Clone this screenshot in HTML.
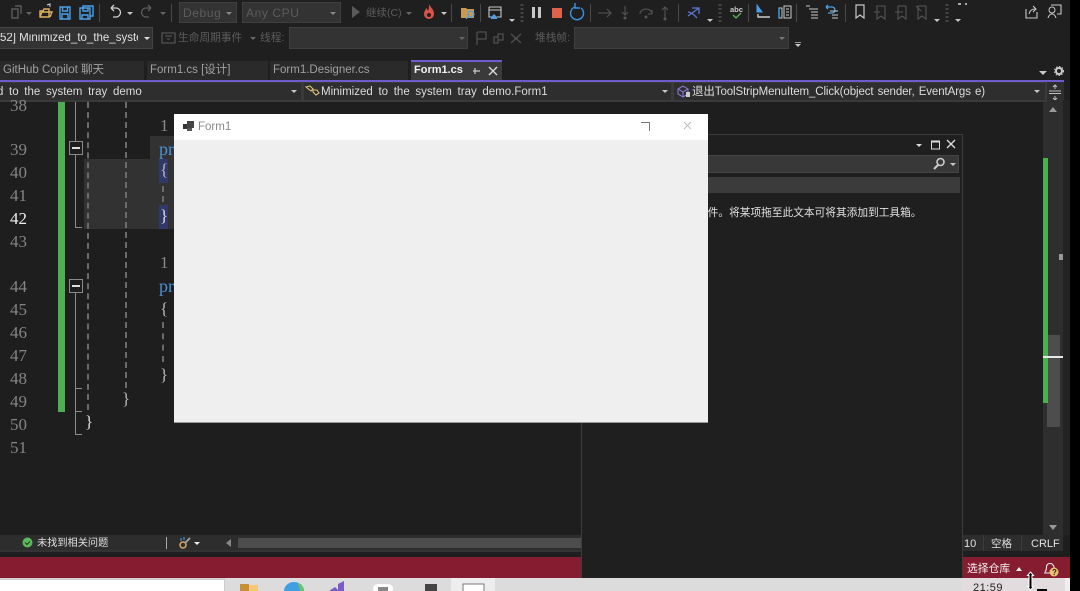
<!DOCTYPE html>
<html><head><meta charset="utf-8"><style>
html,body{margin:0;padding:0;width:1080px;height:591px;overflow:hidden;background:#000}
#r{position:relative;width:1080px;height:591px;overflow:hidden;background:#000;font-family:"Liberation Sans","Noto Sans CJK SC",sans-serif}
#r div,#r svg,#r span.t{position:absolute}
.t{white-space:nowrap;line-height:1}
.n{font-family:"Liberation Serif",serif;font-size:17px;color:#858585;left:10px}
.c{font-family:"Liberation Serif",serif;font-size:17px;color:#b8b8b8}
.b{font-family:"Liberation Serif",serif;font-size:18px;color:#4a8fd8;left:159px}
.sep{width:1px;background:#4a4a4a;top:4px;height:18px}
.car{width:0;height:0;border-left:3px solid transparent;border-right:3px solid transparent;border-top:3px solid #c8c8c8}
.dis{border-top-color:#666}
.dd{background:#333;border:1px solid #3f3f3f;box-sizing:border-box}
.g{color:#5c5c5c;font-size:11.5px}
.tab{top:61px;height:19px;background:#2a2a2a;font-size:11.5px;color:#a0a0a0;line-height:18px;box-sizing:border-box;padding-left:3px;white-space:nowrap}
.nav{font-size:11.5px;color:#dcdcdc;word-spacing:2.5px;top:87px}
.dash{width:0;border-left:2px dashed #6a6a6a}
.box{left:69px;width:12px;height:12px;border:1px solid #8a8a8a;background:#1e1e1e}
.box:after{content:"";position:absolute;left:2px;right:2px;top:5px;height:2px;background:#ddd}
.tk{background:#8c8c8c;height:1px;left:75px;width:7px}
</style></head><body><div id="r">

<!-- chrome background -->
<div style="left:0;top:0;width:1070px;height:100px;background:#1f1f1f"></div>

<!-- toolbar row 1 -->
<svg style="left:0;top:0" width="1070" height="26" viewBox="0 0 1070 26" fill="none">
<path d="M12 9h6v9h-6zM15 6h6v8" stroke="#5a5a5a" stroke-width="1.400"/>
<path d="M40 11h3l1-2h5v8H40zM40 17l2-5h10l-2 5" stroke="#e0b060" stroke-width="1.400"/><path d="M47 5l3-1v3" stroke="#ddd"/>
<path d="M60 7h10v12H60zM62.500 7v4h5V7M62 19v-5h6v5" stroke="#4aa0e8" stroke-width="1.400"/>
<path d="M80 8h10v11H80zM83 8V6h10v10h-3M83 8v3h5V8M82 19v-4h6v4" stroke="#4aa0e8" stroke-width="1.400"/>
<path d="M111 8h5a4 4 0 0 1 0 9h-3M111 8l3-3M111 8l3 3" stroke="#d0d0d0" stroke-width="1.300"/>
<path d="M151 8h-5a4 4 0 0 0 0 9h3M151 8l-3-3M151 8l-3 3" stroke="#5c5c5c" stroke-width="1.300"/>
<path d="M352 6l8 6-8 6z" fill="#5a5a5a"/>
<path d="M429 4c1 3 5 5 5 10a5 5 0 0 1-10 0c0-3 2-4 2-6 1 1 2 2 2 3 1-2 1-5 1-7z" fill="#d9534a"/><circle cx="429" cy="15" r="2" fill="#2a1a1a"/>
<path d="M461 8h5l1 1h7v9h-13z" fill="#c99a54"/><circle cx="471" cy="14" r="3" stroke="#4aa0e8" stroke-width="1.200"/><path d="M469 16l-3 3" stroke="#4aa0e8" stroke-width="1.200"/>
<path d="M489 7h12v10h-4M489 7v10h3M489 10h12" stroke="#c8c8c8" stroke-width="1.100"/><path d="M491 17l3-3 3 3v2h-6z" fill="#4aa0e8"/>
<rect x="532" y="7" width="3" height="11" fill="#c8c8c8"/><rect x="538" y="7" width="3" height="11" fill="#c8c8c8"/>
<rect x="552" y="8" width="10" height="10" fill="#e0624a"/>
<path d="M581 8a6.500 6.500 0 1 1-6-1M575 3v5h5" stroke="#3c94e4" stroke-width="1.400"/>
<path d="M598 13h13M607 9l4 4-4 4" stroke="#555" stroke-width="1.100"/>
<path d="M625 6v9M622 12l3 3 3-3" stroke="#555" stroke-width="1.100"/><circle cx="625" cy="18" r="1.500" fill="#555"/>
<path d="M640 14a6 5 0 0 1 12 0M652 10v4h-4" stroke="#555" stroke-width="1.100"/><circle cx="646" cy="17" r="1.500" fill="#555"/>
<path d="M665 18V8M662 10l3-3 3 3" stroke="#555" stroke-width="1.100"/><circle cx="665" cy="19" r="1.500" fill="#555"/>
<path d="M688 16l11-8M692 8h7v6M688 12c4 0 7 4 9 6" stroke="#5a78d8" stroke-width="1.300"/>
<text x="730" y="12" font-size="7.500" font-weight="bold" fill="#ccc" font-family="Liberation Sans">abc</text><path d="M733 15l3 3 5-5" stroke="#5bb85b" stroke-width="1.300"/>
<path d="M757 5l5 7h-5z" fill="#4aa0e8" stroke="#4aa0e8"/><path d="M758 14v3h12" stroke="#ccc" stroke-width="1.400"/>
<path d="M779 8h3v10h-3zM784 6h7v12h-7zM786 9h3M786 12h3M786 15h3" stroke="#c8c8c8" stroke-width="1"/><path d="M779 8v10" stroke="#4aa0e8" stroke-width="1.400"/>
<path d="M806 6h4M809 9h9M811 12h7M811 15h7M811 18h7" stroke="#c8c8c8" stroke-width="1"/>
<path d="M826 7h6a3 3 0 0 1 0 6h-4M826 7l2-2M826 7l2 2" stroke="#4aa0e8" stroke-width="1.300"/><path d="M830 11h8M832 15h6M832 18h6" stroke="#c8c8c8"/>
<path d="M856 5h8v13l-4-3-4 3z" stroke="#c8c8c8" stroke-width="1.200"/>
<path d="M877 6h8v13l-4-3-4 3zM874 12h6" stroke="#555" stroke-width="1.100"/>
<path d="M898 6h8v13l-4-3-4 3zM895 12h8" stroke="#555" stroke-width="1.100"/>
<path d="M918 6h8v13l-4-3-4 3zM916 6l5 5" stroke="#555" stroke-width="1.100"/>
<path d="M1026 9v9h11v-6M1029 14c1-4 3-5 6-5M1033 6l3 3-3 3" stroke="#c8c8c8" stroke-width="1.100"/>
<path d="M1051 5h10v9h-4M1048 18c1-3 2-4 4-4s3 1 4 4" stroke="#c8c8c8" stroke-width="1.100"/><circle cx="1052" cy="10" r="3" stroke="#c8c8c8"/>
<path d="M522 4v18M720 4v18M947 4v18" stroke="#444" stroke-width="3" stroke-dasharray="2 2"/>
<path d="M958 4h3M965 4h2" stroke="#aaa" stroke-width="2"/>
</svg>
<div class="sep" style="left:99px"></div><div class="sep" style="left:171px"></div><div class="sep" style="left:451px"></div><div class="sep" style="left:480px"></div><div class="sep" style="left:590px"></div><div class="sep" style="left:678px"></div><div class="sep" style="left:748px"></div><div class="sep" style="left:796px"></div><div class="sep" style="left:845px"></div>
<div class="car dis" style="left:26px;top:12px"></div><div class="car" style="left:127px;top:12px"></div><div class="car dis" style="left:160px;top:12px"></div>
<div class="dd" style="left:179px;top:2px;width:58px;height:21px"></div><span class="t g" style="left:183px;top:7px;font-size:12px;letter-spacing:.6px">Debug</span><div class="car dis" style="left:226px;top:12px;border-top-color:#888"></div>
<div class="dd" style="left:242px;top:2px;width:99px;height:21px"></div><span class="t g" style="left:246px;top:7px;font-size:12px;letter-spacing:.6px">Any CPU</span><div class="car dis" style="left:330px;top:12px;border-top-color:#888"></div>
<span class="t g" style="left:366px;top:8px;font-size:10.500px">继续(C)</span><div class="car dis" style="left:406px;top:12px"></div><div class="car" style="left:441px;top:12px"></div>
<div class="car" style="left:509px;top:19px"></div><div class="car" style="left:707px;top:19px"></div><div class="car" style="left:934px;top:19px"></div><div class="car" style="left:955px;top:19px"></div>

<!-- toolbar row 2 -->
<div class="dd" style="left:-2px;top:27px;width:155px;height:22px;border-color:#444"></div>
<span class="t" style="left:0;top:33px;width:138px;overflow:hidden;position:absolute;font-size:11.500px;color:#e0e0e0">52] Minimized_to_the_system</span><div class="car" style="left:144px;top:37px;border-top-color:#ddd"></div>
<svg style="left:160px;top:30px" width="18" height="16" fill="none"><path d="M2 3h13v10H2zM5 6h7M7 9h3" stroke="#5c5c5c" stroke-width="1.100"/></svg>
<span class="t g" style="left:178px;top:33px;font-size:10.700px">生命周期事件</span><div class="car dis" style="left:250px;top:37px"></div>
<span class="t g" style="left:260px;top:33px;font-size:10.700px">线程:</span>
<div class="dd" style="left:289px;top:27px;width:179px;height:22px"></div><div class="car dis" style="left:459px;top:37px"></div>
<svg style="left:474px;top:29px" width="60" height="18" fill="none"><path d="M3 3v13M3 3h9v7H3M20 8h4v6h-4zM24 5h5v6h-5zM37 5l10 9M47 5L37 14M40 9h4" stroke="#4f4f4f" stroke-width="1.300"/></svg>
<span class="t g" style="left:535px;top:33px;font-size:10.700px">堆栈帧:</span>
<div class="dd" style="left:574px;top:27px;width:215px;height:22px"></div><div class="car dis" style="left:779px;top:37px;border-top-color:#777"></div>
<div class="car" style="left:795px;top:44px"></div><div style="left:795px;top:42px;width:6px;height:1px;background:#999"></div>

<!-- tabs -->
<div class="tab" style="left:0;width:144px">GitHub Copilot 聊天</div>
<div class="tab" style="left:147px;width:121px">Form1.cs [设计]</div>
<div class="tab" style="left:270px;width:138px">Form1.Designer.cs</div>
<div style="left:411px;top:60px;width:91px;height:20px;background:#3a3a3a;border-top:2px solid #6c5ccc;box-sizing:border-box"></div>
<span class="t" style="left:414px;top:65px;font-size:11px;font-weight:bold;color:#f0f0f0">Form1.cs</span>
<svg style="left:470px;top:64px" width="30" height="14" fill="none"><path d="M5 4v6M5 7h5M3 7h2" stroke="#ccc" stroke-width="1.200"/><path d="M19 3l8 8M27 3l-8 8" stroke="#ddd" stroke-width="1.300"/></svg>
<div class="car" style="left:1039px;top:71px;border-left-width:4px;border-right-width:4px;border-top-width:4px"></div>
<svg style="left:1053px;top:65px" width="12" height="12" fill="none"><circle cx="6" cy="6" r="3" stroke="#ccc" stroke-width="2"/><circle cx="6" cy="6" r="4.500" stroke="#ccc" stroke-width="1" stroke-dasharray="1.500 1.500"/></svg>
<div style="left:0;top:80px;width:1064px;height:2px;background:#6c5ccc"></div>

<!-- nav bar -->
<div style="left:0;top:82px;width:1064px;height:20px;background:#3a3a3a"></div>
<div style="left:0;top:83px;width:301px;height:17px;background:#2e2e2e"></div>
<div style="left:304px;top:83px;width:367px;height:17px;background:#2e2e2e"></div>
<div style="left:674px;top:83px;width:371px;height:17px;background:#2e2e2e"></div>
<div style="left:1047px;top:82px;width:17px;height:20px;background:#2e2e2e"></div>
<span class="t nav" style="left:9px">to the system tray demo</span>
<span class="t nav" style="left:-3px">d</span>
<svg style="left:305px;top:84px" width="16" height="14" fill="none"><path d="M1 3l4-1 3 3-2 2zM8 6l4 0 2 3-3 2-3-3z" stroke="#e0c080" stroke-width="1.100"/></svg>
<span class="t nav" style="left:321px">Minimized to the system tray demo.Form1</span>
<svg style="left:676px;top:84px" width="16" height="14" fill="none"><path d="M2 5l5-3 5 3v5l-5 3-5-3zM2 5l5 3 5-3M7 8v5" stroke="#8c74cc" stroke-width="1.100"/><rect x="10" y="8" width="4" height="5" fill="#ccc"/></svg>
<span class="t nav" style="left:692px;word-spacing:1px;letter-spacing:-.1px">退出ToolStripMenuItem_Click(object sender, EventArgs e)</span>
<div class="car" style="left:291px;top:90px"></div><div class="car" style="left:662px;top:90px"></div><div class="car" style="left:1034px;top:90px"></div>
<svg style="left:1047px;top:84px" width="16" height="16" fill="none"><path d="M2 7h12M2 9.500h12M8 1v4M8 12v4M6 3l2-2 2 2M6 14l2 2 2-2" stroke="#c0c0c0"/></svg>

<!-- editor -->
<div style="left:0;top:102px;width:1043px;height:433px;background:#1e1e1e"></div>
<div style="left:0;top:535px;width:1070px;height:23px;background:#1e1e1e"></div>
<div style="left:1043px;top:102px;width:20px;height:433px;background:#2e2e2e"></div>
<div style="left:1063px;top:100px;width:7px;height:435px;background:#232323"></div>
<div style="left:150px;top:136px;width:30px;height:70px;background:#323232"></div>
<div style="left:84px;top:159px;width:90px;height:70px;background:#323232"></div>
<div style="left:159px;top:159px;width:9px;height:24px;background:#31396a"></div>
<div style="left:159px;top:205px;width:9px;height:24px;background:#31396a"></div>
<div style="left:58px;top:102px;width:7px;height:310px;background:#4caf50"></div>

<div class="dash" style="left:87px;top:102px;height:308px"></div>
<div class="dash" style="left:125px;top:102px;height:286px"></div>
<div class="dash" style="left:162px;top:186px;height:16px"></div>
<div class="dash" style="left:162px;top:322px;height:40px"></div>
<div style="left:75px;top:102px;width:1px;height:39px;background:#8c8c8c"></div>
<div style="left:75px;top:155px;width:1px;height:73px;background:#8c8c8c"></div>
<div style="left:75px;top:293px;width:1px;height:141px;background:#8c8c8c"></div>
<div class="tk" style="top:227px"></div><div class="tk" style="top:388px"></div><div class="tk" style="top:411px"></div><div class="tk" style="top:434px"></div>
<div class="box" style="top:141px"></div><div class="box" style="top:279px"></div>

<span class="t n" style="top:97px">38</span><span class="t n" style="top:141px">39</span><span class="t n" style="top:164px">40</span><span class="t n" style="top:187px">41</span><span class="t n" style="top:210px;color:#eee">42</span><span class="t n" style="top:233px">43</span><span class="t n" style="top:278px">44</span><span class="t n" style="top:301px">45</span><span class="t n" style="top:324px">46</span><span class="t n" style="top:347px">47</span><span class="t n" style="top:370px">48</span><span class="t n" style="top:393px">49</span><span class="t n" style="top:416px">50</span><span class="t n" style="top:439px">51</span>
<span class="t c" style="left:160px;top:117px;color:#8a8a8a">1</span><span class="t c" style="left:160px;top:254px;color:#8a8a8a">1</span>
<span class="t b" style="top:140px">pr</span><span class="t b" style="top:277px">pr</span>
<span class="t c" style="left:160px;top:161px">{</span><span class="t c" style="left:160px;top:207px;color:#ddd">}</span>
<span class="t c" style="left:160px;top:300px">{</span><span class="t c" style="left:160px;top:366px">}</span>
<span class="t c" style="left:122px;top:390px">}</span><span class="t c" style="left:85px;top:413px;color:#ddd">}</span>

<!-- v scrollbar -->
<div style="left:1047px;top:335px;width:13px;height:92px;background:#4d4d4d"></div>
<div style="left:1043px;top:158px;width:5px;height:245px;background:#4caf50"></div>
<div style="left:1043px;top:356px;width:20px;height:2px;background:#e8e8e8"></div>
<div style="left:1059px;top:254px;width:4px;height:6px;background:#999"></div>
<div style="left:1049px;top:107px;width:0;height:0;border-left:4px solid transparent;border-right:4px solid transparent;border-bottom:5px solid #999"></div>
<div style="left:1049px;top:525px;width:0;height:0;border-left:4px solid transparent;border-right:4px solid transparent;border-top:5px solid #999"></div>

<!-- status of editor -->
<div style="left:0;top:535px;width:582px;height:15px;background:#2d2d2d"></div>
<div style="left:0;top:550px;width:582px;height:2px;background:#333"></div>
<svg style="left:21px;top:536px" width="13" height="13"><circle cx="6.500" cy="6.500" r="5" fill="#5cb85c"/><path d="M4 6.500l2 2 3-3" stroke="#1e3a1e" fill="none"/></svg>
<span class="t" style="left:37px;top:539px;font-size:10.200px;color:#e0e0e0">未找到相关问题</span>
<div style="left:166px;top:537px;width:1px;height:12px;background:#aaa"></div>
<svg style="left:178px;top:536px" width="14" height="14" fill="none"><circle cx="5" cy="9" r="3" stroke="#d8a868" stroke-width="1.500"/><path d="M7 7l5-5" stroke="#999" stroke-width="2"/><path d="M3 2v3M6 1v3" stroke="#4aa0e8"/></svg>
<div class="car" style="left:194px;top:542px;border-top-color:#eee"></div>
<div style="left:226px;top:539px;width:0;height:0;border-top:4px solid transparent;border-bottom:4px solid transparent;border-right:5px solid #888"></div>
<div style="left:238px;top:538px;width:344px;height:10px;background:#4d4d4d"></div>

<div style="left:962px;top:535px;width:101px;height:16px;background:#2d2d2d"></div>
<span class="t" style="left:964px;top:539px;font-size:11px;color:#e0e0e0">10</span>
<span class="t" style="left:991px;top:539px;font-size:10.500px;color:#e0e0e0">空格</span>
<span class="t" style="left:1031px;top:539px;font-size:11px;color:#e0e0e0">CRLF</span>
<div style="left:983px;top:535px;width:1px;height:16px;background:#3c3c3c"></div><div style="left:1021px;top:535px;width:1px;height:16px;background:#3c3c3c"></div>

<!-- red bar + taskbar -->
<div style="left:0;top:557px;width:1070px;height:21px;background:#861c2f"></div>
<div style="left:0;top:578px;width:1070px;height:13px;background:#dcdcdc"></div>
<div style="left:962px;top:578px;width:103px;height:13px;background:#e2dcdf"></div>
<div style="left:0;top:578px;width:224px;height:2px;background:#cfcfcf"></div>
<div style="left:0;top:580px;width:224px;height:11px;background:#fff"></div>
<div style="left:224px;top:578px;width:1px;height:13px;background:#ccc"></div>
<div style="left:451px;top:578px;width:44px;height:13px;background:#ededed"></div>
<svg style="left:230px;top:578px" width="260" height="13" fill="none">
<rect x="10" y="6" width="9" height="7" fill="#c89036"/><rect x="19" y="7" width="9" height="6" fill="#f3c879"/>
<path d="M54 13a10 9 0 0 1 20 0z" fill="#3f9fe0"/><path d="M68 5a8 8 0 0 1 6 8h-4z" fill="#69c36b"/>
<path d="M99 13l6-4 4 4zM108 13V6l6-3v10z" fill="#7a5cc8"/>
<rect x="143" y="6" width="20" height="9" rx="5" fill="#fff"/><rect x="148" y="9" width="10" height="4" fill="#888"/>
<rect x="195" y="6" width="12" height="7" fill="#444"/>
<rect x="233" y="6" width="21" height="10" stroke="#777" fill="#fff"/>
</svg>
<span class="t" style="left:973px;top:583px;font-size:11px;color:#222;letter-spacing:.5px">21:59</span>
<div style="left:1037px;top:589px;width:10px;height:2px;background:#000"></div>
<div style="left:1065px;top:578px;width:5px;height:13px;background:#f2eeef"></div>

<span class="t" style="left:967px;top:564px;font-size:10.800px;color:#f2f2f2">选择仓库</span>
<div style="left:1016px;top:567px;width:0;height:0;border-left:3.500px solid transparent;border-right:3.500px solid transparent;border-bottom:4px solid #eee"></div>
<svg style="left:1043px;top:560px" width="17" height="18" fill="none"><path d="M2 12c2-2 1-5 2-7 1-2 5-2 6 0 1 1 1 3 2 4M1 13h7" stroke="#eee" stroke-width="1.100"/><circle cx="11" cy="12" r="4.500" fill="#f0c070"/><text x="9" y="15" font-size="8" fill="#222" font-family="Liberation Sans" font-weight="bold">?</text></svg>
<svg style="left:1024px;top:571px" width="13" height="20"><path d="M6.500 1l3 3.500H8v11h1.500l-3 3.500-3-3.500H5v-11H3.500z" fill="#000" stroke="#fff" stroke-width="1"/></svg>

<!-- right panel -->
<div style="left:581px;top:134px;width:382px;height:444px;background:#1f1f1f;border:1px solid #3c3c3c;border-bottom:none;box-sizing:border-box"></div>
<div style="left:582px;top:155px;width:377px;height:18px;background:#383838;border:1px solid #444;box-sizing:border-box"></div>
<div style="left:582px;top:177px;width:378px;height:16px;background:#3b3b3b"></div>
<div class="car" style="left:916px;top:144px;border-top-color:#ddd"></div>
<svg style="left:928px;top:137px" width="30" height="15" fill="none"><path d="M3.500 4h8v8h-8z" stroke="#ddd"/><path d="M3 4.500h9" stroke="#ddd" stroke-width="2"/><path d="M19 3l8 8M27 3l-8 8" stroke="#ddd" stroke-width="1.300"/></svg>
<svg style="left:932px;top:156px" width="14" height="15" fill="none"><circle cx="8.500" cy="6" r="3.500" stroke="#ccc" stroke-width="1.600"/><path d="M6 9l-4 4" stroke="#ccc" stroke-width="2"/></svg>
<div class="car" style="left:950px;top:163px"></div>
<span class="t" style="left:697px;top:208px;font-size:10.700px;color:#e0e0e0">控件。将某项拖至此文本可将其添加到工具箱。</span>

<!-- Form1 window -->
<div style="left:174px;top:114px;width:534px;height:309px;background:#efefef;border-bottom:1px solid #999;box-sizing:border-box"></div>
<div style="left:174px;top:114px;width:534px;height:26px;background:#fff"></div>
<svg style="left:182px;top:120px" width="14" height="13"><rect x="5" y="1" width="7" height="7" fill="#444"/><rect x="1" y="4" width="4" height="5" fill="#333"/><rect x="5" y="8" width="5" height="3" fill="#555"/></svg>
<span class="t" style="left:198px;top:122px;font-size:11.500px;color:#8a8a8a">Form1</span>
<svg style="left:638px;top:118px" width="55" height="16" fill="none"><path d="M3 4.500h8.500V13" stroke="#777"/><path d="M46 4l7 7M53 4l-7 7" stroke="#bbb"/></svg>

</div></body></html>
